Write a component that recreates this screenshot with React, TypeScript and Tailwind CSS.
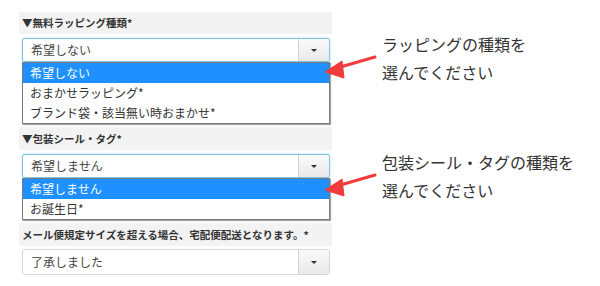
import React from "react";

const font = { fontFamily: '"Noto Sans CJK JP", "Noto Sans", sans-serif' };

function Caret() {
  return (
    <div className="w-0 h-0 border-l-[3px] border-r-[3px] border-t-[3px] border-l-transparent border-r-transparent border-t-[#333]" />
  );
}

function SelectBox({ value, focused, tall }: { value: string; focused?: boolean; tall?: boolean }) {
  return (
    <div
      className={
        "ml-[3px] w-[308px] flex rounded-[3px] border bg-white " +
        (tall ? "h-[26px] " : "h-[24px] ") +
        (focused
          ? "border-[#7dc6dd] shadow-[0_0_2px_rgba(102,175,233,0.6)]"
          : "border-[#d6d6d6]")
      }
    >
      <div className="flex-1 flex items-center pl-[8px] text-[12px] text-[#444]">{value}</div>
      <div className="w-[31px] flex items-center justify-center border-l border-[#d0d0d0] bg-gradient-to-b from-[#fafafa] to-[#e9e9e9] rounded-r-[3px]">
        <Caret />
      </div>
    </div>
  );
}

function OptionList({ items }: { items: string[] }) {
  return (
    <div className="ml-[3px] w-[308px] bg-white border border-[#7a7a7a] shadow-[1px_1px_1px_rgba(0,0,0,0.35)]">
      {items.map((t, i) => (
        <div
          key={i}
          className={
            "h-[20px] leading-[20px] pl-[7px] text-[12px] " +
            (i === 0 ? "bg-[#1e90ff] text-white" : "text-[#333]")
          }
        >
          {t}
        </div>
      ))}
    </div>
  );
}

function Header({ text, h }: { text: string; h: string }) {
  return (
    <div className={"bg-[#f3f3f3] flex items-center pl-[3px] text-[10.5px] font-bold text-[#333] " + h}>
      {text}
    </div>
  );
}

export default function App() {
  return (
    <div className="relative w-[600px] h-[286px] bg-white flex overflow-hidden" style={font}>
      <div className="w-[332px] shrink-0 pl-[19px] pt-[12px]">
        <Header text="▼無料ラッピング種類*" h="h-[22px]" />
        <div className="mt-[4px]">
          <SelectBox value="希望しない" focused />
          <OptionList items={["希望しない", "おまかせラッピング*", "ブランド袋・該当無い時おまかせ*"]} />
        </div>
        <div className="mt-[3px]">
          <Header text="▼包装シール・タグ*" h="h-[23px]" />
        </div>
        <div className="mt-[4px]">
          <SelectBox value="希望しません" focused />
          <OptionList items={["希望しません", "お誕生日*"]} />
        </div>
        <div className="mt-[3px]">
          <Header text="メール便規定サイズを超える場合、宅配便配送となります。*" h="h-[23px]" />
        </div>
        <div className="mt-[3px]">
          <SelectBox value="了承しました" tall />
        </div>
      </div>
      <div className="pl-[50px] pt-[30px] text-[16px] leading-[28px] text-[#333]">
        <div>
          ラッピングの種類を
          <br />
          選んでください
        </div>
        <div className="mt-[62px]">
          包装シール・タグの種類を
          <br />
          選んでください
        </div>
      </div>
      <svg className="absolute inset-0 pointer-events-none" width="600" height="286" viewBox="0 0 600 286">
        <g fill="#f03c3c" stroke="#f03c3c">
          <line x1="375" y1="57" x2="337" y2="68" strokeWidth="3" strokeLinecap="round" />
          <polygon points="325,72 342,61 344,78" strokeWidth="1" strokeLinejoin="round" />
          <line x1="375" y1="175" x2="337" y2="186" strokeWidth="3" strokeLinecap="round" />
          <polygon points="325,190 342,179 344,196" strokeWidth="1" strokeLinejoin="round" />
        </g>
      </svg>
    </div>
  );
}
